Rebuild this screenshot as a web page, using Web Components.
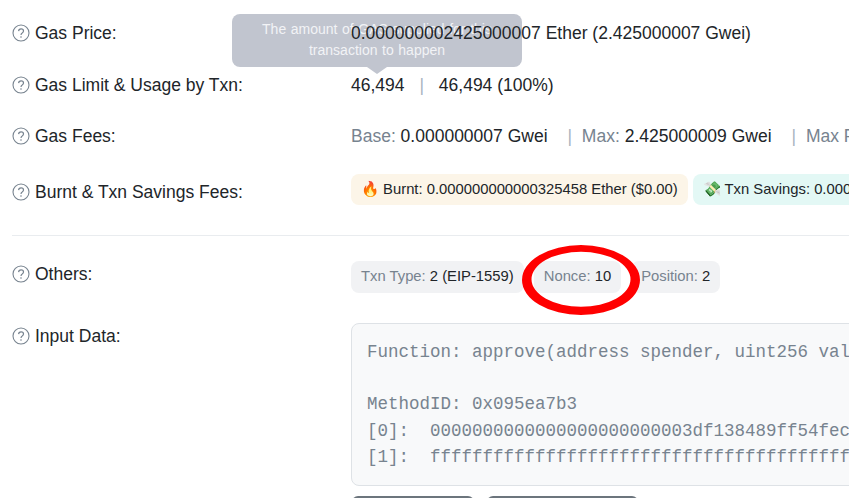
<!DOCTYPE html>
<html>
<head>
<meta charset="utf-8">
<title>Transaction details</title>
<style>
  html, body { margin: 0; padding: 0; background: #fff; overflow: hidden; }
  body { width: 849px; height: 498px; font: 17.5px/26.25px "Liberation Sans", Arial, sans-serif; color: #212529; }
</style>
</head>
<body>
<tx-page>
  <hint-tooltip slot="overlay">The amount of GAS supplied for this transaction to happen</hint-tooltip>
  <mark-ellipse slot="overlay"></mark-ellipse>

  <tx-row label="Gas Price:" gap="25.75">0.000000002425000007 Ether (2.425000007 Gwei)</tx-row>
  <tx-row label="Gas Limit &amp; Usage by Txn:" gap="24.75">46,494<tx-sep></tx-sep>46,494 (100%)</tx-row>
  <tx-row label="Gas Fees:" gap="29.75"><tx-muted>Base:</tx-muted> 0.000000007 Gwei<tx-sep wide></tx-sep><tx-muted>Max:</tx-muted> 2.425000009 Gwei<tx-sep wide></tx-sep><tx-muted>Max Priority:</tx-muted> 2.425000002 Gwei</tx-row>
  <tx-row label="Burnt &amp; Txn Savings Fees:" gap="0" badges>
    <tx-badge tone="burn">🔥 Burnt: 0.000000000000325458 Ether ($0.00)</tx-badge>
    <tx-badge tone="save">💸 Txn Savings: 0.000000000000000093 Ether ($0.00)</tx-badge>
  </tx-row>
  <tx-rule></tx-rule>
  <tx-row label="Others:" gap="30" spaced>
    <tx-badge><tx-muted>Txn Type:</tx-muted> 2 (EIP-1559)</tx-badge>
    <tx-badge><tx-muted>Nonce:</tx-muted> 10</tx-badge>
    <tx-badge><tx-muted>Position:</tx-muted> 2</tx-badge>
  </tx-row>
  <tx-row label="Input Data:" gap="0" block>
    <code-box>Function: approve(address spender, uint256 value)

MethodID: 0x095ea7b3
[0]:  0000000000000000000000003df138489ff54fec0000000000000000000000000
[1]:  ffffffffffffffffffffffffffffffffffffffffffffffffffffffffffffffff</code-box>
    <tool-bar>
      <tx-button style="width:122px"></tx-button>
      <tx-button style="width:151px"></tx-button>
    </tool-bar>
  </tx-row>
</tx-page>

<script>
// small helper, every element gets an open shadow root with its own style
function shadow(el, html) {
    el.attachShadow({ mode: 'open' });
    el.shadowRoot.innerHTML = html;
}

class TxPage extends HTMLElement {
    constructor() {
        super();
        shadow(this, `
            <style>
                :host { display: block; position: relative; width: 849px; height: 498px; overflow: hidden; box-sizing: border-box; padding: 20px 0 0 12px; }
            </style>
            <slot></slot>
            <slot name="overlay"></slot>
        `);
    }
}
customElements.define('tx-page', TxPage);

class InfoIcon extends HTMLElement {
    constructor() {
        super();
        shadow(this, `
            <style>
                :host { display: inline-flex; width: 18px; height: 18px; margin-right: 5px; flex: none; }
                svg { width: 18px; height: 18px; }
            </style>
            <svg viewBox="0 0 18 18" fill="none" stroke="#77838f">
                <circle cx="9" cy="9" r="8" stroke-width="1.1"/>
                <path d="M6.6 7.1c.1-1.4 1.1-2.2 2.5-2.2 1.4 0 2.4.8 2.4 2 0 1-.6 1.5-1.3 2-.7.4-1.1.8-1.1 1.7v.3" stroke-width="1.2"/>
                <circle cx="9" cy="13" r=".8" fill="#77838f" stroke="none"/>
            </svg>
        `);
    }
}
customElements.define('info-icon', InfoIcon);

class TxRow extends HTMLElement {
    constructor() {
        super();
        shadow(this, `
            <style>
                :host { display: flex; align-items: flex-start; }
                .label { display: flex; align-items: center; width: 339px; flex: none; height: 26.25px; white-space: nowrap; }
                .value { position: relative; z-index: 2; white-space: nowrap; min-width: 0; }
                :host([badges]) .value, :host([spaced]) .value { display: flex; }
                :host([badges]) .value { gap: 5px; margin-top: -5px; }
                :host([spaced]) .value { gap: 10px; }
                :host([block]) .value { display: block; }
            </style>
            <div class="label"><info-icon></info-icon><span id="t"></span></div>
            <div class="value"><slot></slot></div>
        `);
    }
    connectedCallback() {
        this.shadowRoot.getElementById('t').textContent = this.getAttribute('label');
        this.style.marginBottom = (this.getAttribute('gap') || 0) + 'px';
    }
}
customElements.define('tx-row', TxRow);

class TxMuted extends HTMLElement {
    constructor() {
        super();
        shadow(this, `<style>:host { color: #77838f; }</style><slot></slot>`);
    }
}
customElements.define('tx-muted', TxMuted);

class TxSep extends HTMLElement {
    constructor() {
        super();
        shadow(this, `
            <style>
                :host { color: #a9b4bf; margin: 0 10px; }
                :host([wide]) { margin: 0 5px 0 15px; }
            </style>|
        `);
    }
}
customElements.define('tx-sep', TxSep);

class TxBadge extends HTMLElement {
    constructor() {
        super();
        shadow(this, `
            <style>
                :host { display: block; flex: none; font-size: 14.8px; line-height: 22px; padding: 4px 10px 6px; border-radius: 8px; background: #f1f2f4; white-space: nowrap; }
                :host([tone="burn"]) { background: #fcf5e8; padding: 4px 10px 5px; }
                :host([tone="save"]) { background: #e3f8f5; padding: 4px 10px 5px; }
            </style>
            <slot></slot>
        `);
    }
}
customElements.define('tx-badge', TxBadge);

class TxRule extends HTMLElement {
    constructor() {
        super();
        shadow(this, `<style>:host { display: block; height: 1px; background: #e9ecef; margin: 30px 0 25px; }</style>`);
    }
}
customElements.define('tx-rule', TxRule);

class CodeBox extends HTMLElement {
    constructor() {
        super();
        shadow(this, `
            <style>
                :host { display: block; box-sizing: border-box; width: 700px; height: 163px; padding: 14.5px 15px; border: 1px solid #dee2e6; border-radius: 8px; background: #f8f9fa; color: #77838f; font: 17.5px/26.25px "Liberation Mono", monospace; overflow: hidden; }
                div { white-space: pre; }
            </style>
            <div><slot></slot></div>
        `);
    }
}
customElements.define('code-box', CodeBox);

class ToolBar extends HTMLElement {
    constructor() {
        super();
        shadow(this, `<style>:host { display: flex; gap: 13px; margin: 10px 0 0 1px; }</style><slot></slot>`);
    }
}
customElements.define('tool-bar', ToolBar);

class TxButton extends HTMLElement {
    constructor() {
        super();
        shadow(this, `<style>:host { display: block; height: 30px; border-radius: 6px; background: #6c757d; }</style>`);
    }
}
customElements.define('tx-button', TxButton);

class HintTooltip extends HTMLElement {
    constructor() {
        super();
        shadow(this, `
            <style>
                :host { position: absolute; left: 232px; top: 14px; width: 290px; height: 53px; box-sizing: border-box; padding: 5px 10px; border-radius: 8px; background: #c1c5cf; color: #f2f3f6; font-size: 14px; line-height: 21px; word-spacing: .7px; text-align: center; z-index: 1; }
                .arrow { position: absolute; left: 135px; bottom: -7px; width: 0; height: 0; border: solid transparent; border-width: 7px 10px 0; border-top-color: #c1c5cf; }
            </style>
            <slot></slot><div class="arrow"></div>
        `);
    }
}
customElements.define('hint-tooltip', HintTooltip);

// hand drawn look: the ring is thicker at the sides and the bottom than at the top
class MarkEllipse extends HTMLElement {
    constructor() {
        super();
        shadow(this, `
            <style>
                :host { position: absolute; left: 520px; top: 243px; width: 122px; height: 74px; z-index: 3; }
                svg { display: block; }
            </style>
            <svg width="122" height="74" viewBox="0 0 122 74"><path fill="#f00" fill-rule="evenodd" d="M2 37a59 35 0 1 0 118 0a59 35 0 1 0-118 0zM11.5 36.3a49.5 27.5 0 1 0 99 0a49.5 27.5 0 1 0-99 0z"/></svg>
        `);
    }
}
customElements.define('mark-ellipse', MarkEllipse);
</script>
</body>
</html>
